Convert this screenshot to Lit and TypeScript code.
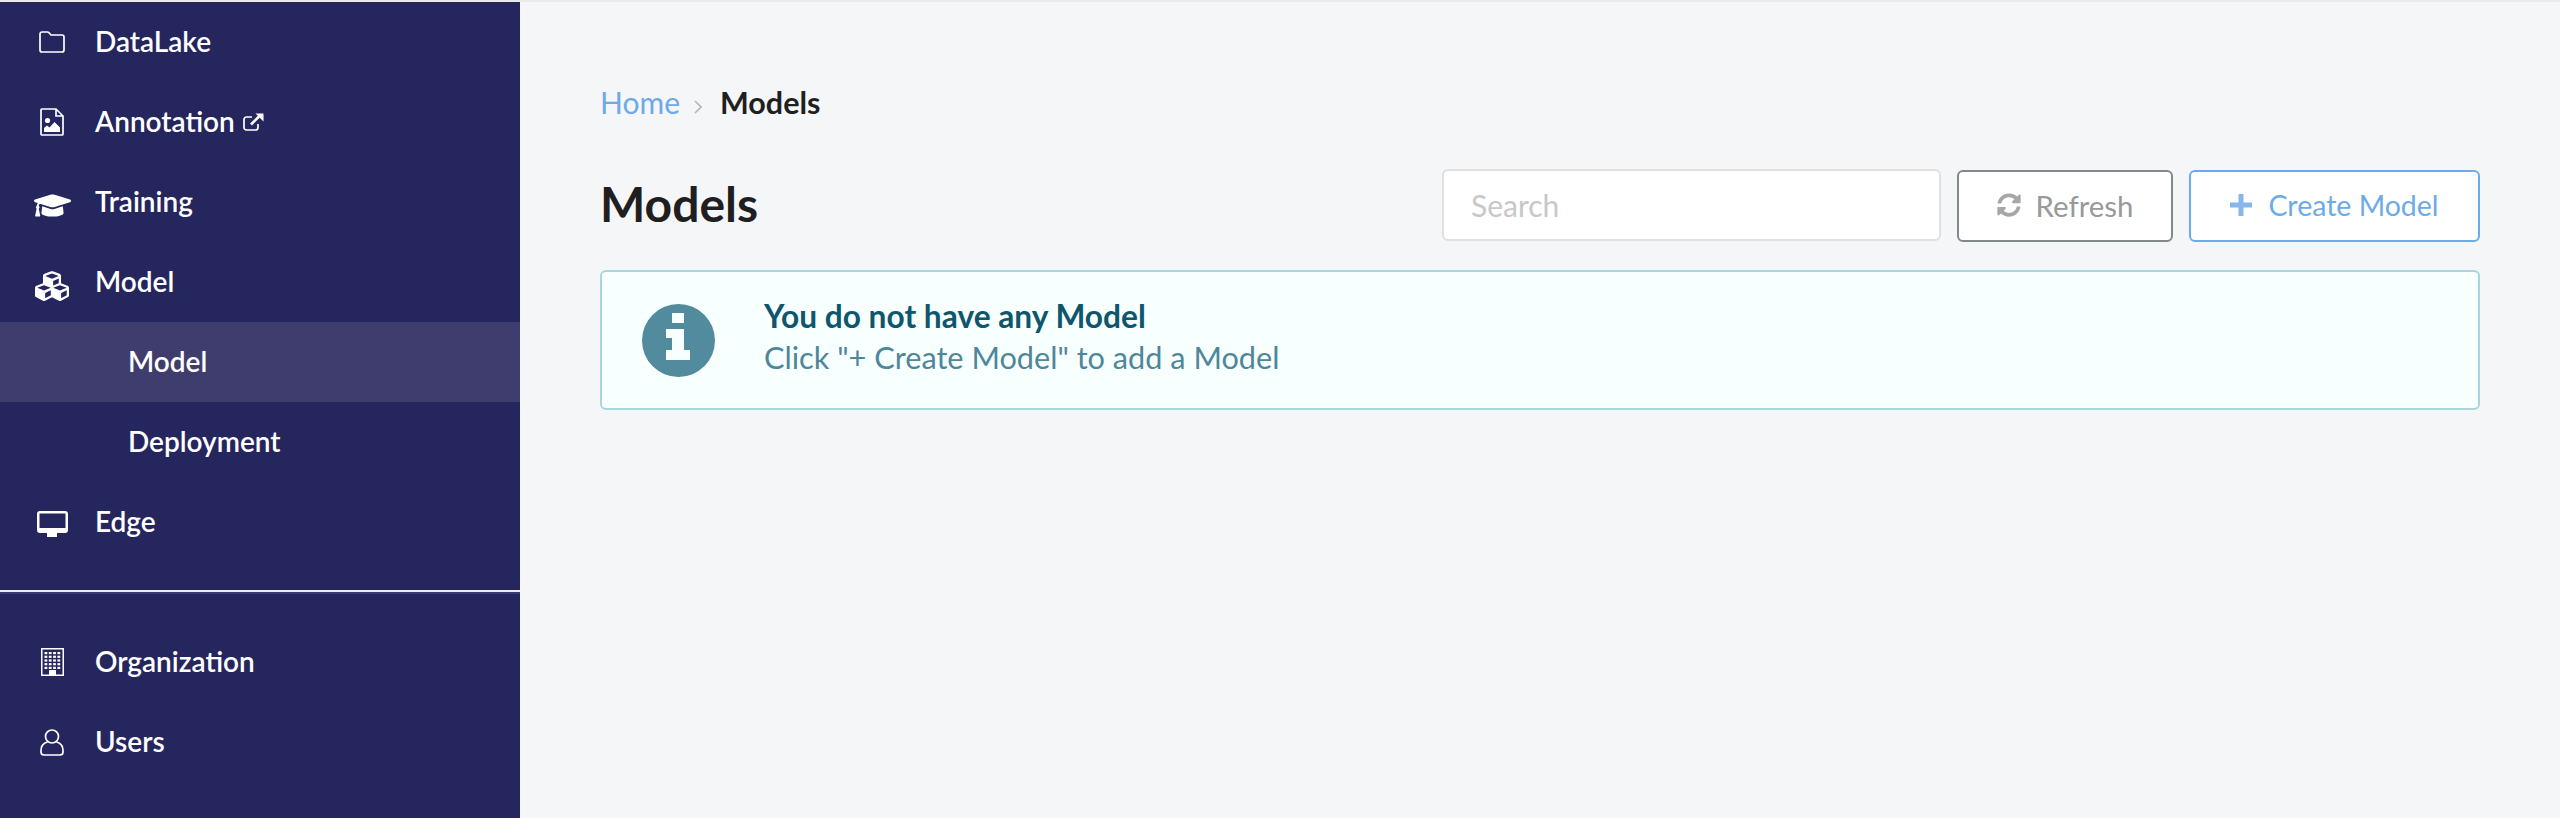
import { LitElement, html, css, svg } from 'lit';
import { customElement } from 'lit/decorators.js';

// icons, all white on the sidebar
const icons: Record<string, unknown> = {
  folder: html`<svg class="ic" width="26" height="22" viewBox="0 0 26 22"><path d="M1 4V3a2 2 0 0 1 2-2h5.500a2 2 0 0 1 1.500.7L12 4h11a2 2 0 0 1 2 2v13a2 2 0 0 1-2 2H3a2 2 0 0 1-2-2z" fill="none" stroke="#fff" stroke-width="1.700"/></svg>`,
  image: html`<svg class="ic" width="24" height="28" viewBox="0 0 24 28"><path d="M2 1h14l7 7v18a1 1 0 0 1-1 1H2a1 1 0 0 1-1-1V2a1 1 0 0 1 1-1zM16 1v7h7" fill="none" stroke="#fff" stroke-width="1.700"/><circle cx="7.500" cy="12.500" r="2.600" fill="#fff"/><path d="M4 24v-4l3-2.500 2.500 2 5-5.500 5.500 5.500V24z" fill="#fff"/></svg>`,
  cap: html`<svg class="ic cap" width="37" height="23" viewBox="0 64 640 384"><path fill="#fff" d="M622.34 153.2L343.4 67.5c-15.2-4.67-31.6-4.67-46.79 0L17.66 153.2c-23.54 7.23-23.54 38.36 0 45.59l48.63 14.94c-10.67 13.19-17.23 29.28-17.88 46.9C38.78 266.15 32 276.11 32 288c0 10.78 5.68 19.85 13.86 25.65L20.33 428.53C18.11 438.52 25.71 448 35.94 448h56.11c10.24 0 17.84-9.48 15.62-19.47L82.14 313.65C90.32 307.85 96 298.78 96 288c0-11.57-6.47-21.25-15.66-26.87.76-15.02 8.44-28.3 20.69-36.72L296.6 284.5c9.06 2.78 26.44 6.25 46.79 0l278.95-85.7c23.55-7.24 23.55-38.36 0-45.6zM352.79 315.09c-28.53 8.76-52.84 3.92-65.59 0l-145.02-44.55L128 384c0 35.35 85.96 64 192 64s192-28.65 192-64l-14.18-113.47-145.03 44.56z"/></svg>`,
  cubes: html`<svg class="ic cubes" width="34" height="30" viewBox="0 30 512 450"><path fill="#fff" d="M488.6 250.2L392 214V105.5c0-15-9.3-28.4-23.4-33.7l-100-37.5c-8.1-3.1-17.1-3.1-25.3 0l-100 37.5c-14.1 5.3-23.4 18.7-23.4 33.7V214l-96.6 36.2C9.3 255.5 0 268.9 0 283.9V394c0 13.6 7.7 26.1 19.9 32.2l100 50c10.1 5.1 22.1 5.1 32.2 0l103.9-52 103.9 52c10.1 5.1 22.1 5.1 32.2 0l100-50c12.2-6.1 19.9-18.6 19.9-32.2V283.9c0-15-9.3-28.4-23.4-33.7zM358 214.8l-85 31.9v-68.2l85-37v73.3zM154 104.1l102-38.2 102 38.2v.6l-102 41.4-102-41.4v-.6zm84 291.1l-85 42.5v-79.1l85-38.8v75.4zm0-112l-102 41.4-102-41.4v-.6l102-38.2 102 38.2v.6zm240 112l-85 42.5v-79.1l85-38.8v75.4zm0-112l-102 41.4-102-41.4v-.6l102-38.2 102 38.2v.6z"/></svg>`,
  desktop: html`<svg class="ic desktop" width="31" height="26" viewBox="0 0 31 26"><path fill="#fff" fill-rule="evenodd" d="M3 0h25a3 3 0 0 1 3 3v16a3 3 0 0 1-3 3H3a3 3 0 0 1-3-3V3a3 3 0 0 1 3-3zM2.500 2.500v14.500h26V2.500z"/><path fill="#fff" d="M10 22h10v4H10z"/></svg>`,
  building: html`<svg class="ic" width="23" height="28" viewBox="0 0 23 28"><path fill="#fff" fill-rule="evenodd" d="M0 0h23v28H0zM1.500 1.500v25h20v-25z"/><path fill="#fff" d="M8 22h7v6H8z"/>${[0, 1, 2, 3, 4].map((r) =>
    [0, 1, 2, 3].map((c) => svg`<rect x=${3.5 + c * 4.3} y=${4 + r * 3.7} width="2.800" height="2.200" fill="#fff"/>`)
  )}</svg>`,
  user: html`<svg class="ic" width="24" height="27" viewBox="0 0 24 27"><circle cx="12" cy="7.500" r="6.500" fill="none" stroke="#fff" stroke-width="1.700"/><path d="M7.500 13C4 14 1 17 1 21.500V23a3 3 0 0 0 3 3h16a3 3 0 0 0 3-3v-1.500C23 17 20 14 16.500 13" fill="none" stroke="#fff" stroke-width="1.700"/></svg>`,
};

const topNav = [
  { label: 'DataLake', icon: 'folder' },
  { label: 'Annotation', icon: 'image', external: true },
  { label: 'Training', icon: 'cap' },
  { label: 'Model', icon: 'cubes' },
  { label: 'Model', sub: true, active: true },
  { label: 'Deployment', sub: true },
  { label: 'Edge', icon: 'desktop' },
];

const bottomNav = [
  { label: 'Organization', icon: 'building' },
  { label: 'Users', icon: 'user' },
];

@customElement('app-root')
export class AppRoot extends LitElement {
  static styles = css`
    :host {
      display: block;
      width: 2560px;
      height: 818px;
      overflow: hidden;
      background: #f5f6f8;
      font-family: 'Lato', sans-serif;
    }
    .page {
      display: flex;
      height: 816px;
      border-top: 2px solid #e9eaec;
    }
    .sidebar {
      flex: 0 0 520px;
      background: #26265f;
      color: #fff;
      display: flex;
      flex-direction: column;
    }
    .row {
      display: flex;
      align-items: center;
      height: 80px;
      font-size: 28px;
      font-weight: 600;
    }
    .row.active {
      background: #3f3c6e;
    }
    .row span.label {
      padding-bottom: 2px;
    }
    .slot {
      flex: 0 0 95px;
      display: flex;
      justify-content: center;
      box-sizing: border-box;
      padding-left: 24px;
      padding-right: 15px;
    }
    .cap {
      margin-top: 6px;
    }
    .cubes {
      margin-top: 8px;
    }
    .desktop {
      margin-top: 4px;
    }
    .sublabel {
      padding-left: 128px;
    }
    .ext {
      margin-left: 8px;
    }
    .divider {
      margin-top: 28px;
      height: 2px;
      background: #eeeef2;
      border-bottom: 2px solid #3a3a70;
      margin-bottom: 28px;
    }
    .main {
      flex: 1;
      padding: 0 80px;
      color: #1f1f1f;
    }
    .crumbs {
      display: flex;
      align-items: center;
      margin-top: 81px;
      height: 38px;
      font-size: 30px;
    }
    .crumbs a {
      color: #6eaae8;
    }
    .crumbs svg {
      margin: 9px 18px 0 14px;
    }
    .crumbs b {
      font-weight: 700;
      font-size: 30.500px;
    }
    .head {
      display: flex;
      justify-content: space-between;
      align-items: flex-start;
      margin-top: 47px;
    }
    h1 {
      margin: 0;
      font-size: 48px;
      font-weight: 700;
      line-height: 72px;
    }
    .tools {
      display: flex;
      align-items: flex-start;
      gap: 16px;
      margin-top: 2px;
    }
    .search {
      width: 499px;
      height: 72px;
      margin-top: -1px;
      box-sizing: border-box;
      border: 2px solid #dfe0e2;
      border-radius: 6px;
      background: #fff;
      padding-left: 27px;
      font-size: 30px;
      color: #c8c8c8;
      display: flex;
      align-items: center;
    }
    .btn {
      height: 72px;
      box-sizing: border-box;
      border-radius: 6px;
      background: #fff;
      display: flex;
      align-items: center;
      justify-content: center;
      padding-bottom: 2px;
    }
    .refresh {
      width: 216px;
      border: 2px solid #838888;
      color: #969a9a;
      font-size: 29.400px;
      gap: 15px;
    }
    .create {
      width: 291px;
      border: 2px solid #6dabe8;
      color: #6dabe8;
      font-size: 28.500px;
      gap: 16px;
    }
    .message {
      display: flex;
      align-items: center;
      height: 140px;
      box-sizing: border-box;
      margin-top: 28px;
      border: 2px solid #a9d5de;
      border-radius: 6px;
      background: #f8ffff;
      padding-left: 40px;
      gap: 49px;
    }
    .msg-text {
      padding-bottom: 6px;
    }
    .msg-title {
      font-size: 31.700px;
      font-weight: 700;
      color: #0e566c;
      line-height: 40px;
    }
    .msg-sub {
      font-size: 30.700px;
      color: #4d8799;
      line-height: 40px;
      margin-top: 2px;
    }
  `;

  renderRow(item: any) {
    if (item.sub) {
      return html`<div class="row ${item.active ? 'active' : ''}"><span class="label sublabel">${item.label}</span></div>`;
    }
    return html`<div class="row">
      <span class="slot">${icons[item.icon]}</span>
      <span class="label">${item.label}</span>
      ${item.external
        ? html`<svg class="ext" width="21" height="18" viewBox="0 0 21 18" fill="none" stroke="#fff" stroke-width="1.700"><path d="M15 11v3.500a2.500 2.500 0 0 1-2.500 2.500H3.500A2.500 2.500 0 0 1 1 14.500v-8A2.500 2.500 0 0 1 3.500 4H9"/><path d="M8 11.500L16 3.500" stroke-width="2.600"/><path d="M12.500 0.500H20.500V8.500z" fill="#fff" stroke="none"/></svg>`
        : ''}
    </div>`;
  }

  render() {
    return html`<div class="page">
      <nav class="sidebar">
        ${topNav.map((i) => this.renderRow(i))}
        <div class="divider"></div>
        ${bottomNav.map((i) => this.renderRow(i))}
      </nav>
      <main class="main">
        <div class="crumbs">
          <a>Home</a>
          <svg width="8" height="14" viewBox="0 0 8 14" fill="none" stroke="#b5b5b5" stroke-width="1.600"><path d="M1 1l6 6-6 6"/></svg>
          <b>Models</b>
        </div>
        <div class="head">
          <h1>Models</h1>
          <div class="tools">
            <div class="search">Search</div>
            <div class="btn refresh">
              <svg width="24" height="24" viewBox="0 0 512 512"><path fill="#a3a7a7" d="M370.72 133.28C339.458 104.008 298.888 87.962 255.848 88c-77.458.068-144.328 53.178-162.791 126.85-1.344 5.363-6.122 9.15-11.651 9.15H24.103c-7.498 0-13.194-6.807-11.807-14.176C33.933 94.924 134.813 8 256 8c66.448 0 126.791 26.136 171.315 68.685L463.03 40.97C478.149 25.851 504 36.559 504 57.941V192c0 13.255-10.745 24-24 24H345.941c-21.382 0-32.09-25.851-16.971-40.971l41.75-41.749zM32 296h134.059c21.382 0 32.09 25.851 16.971 40.971l-41.75 41.75c31.262 29.273 71.835 45.319 114.876 45.28 77.418-.07 144.315-53.144 162.787-126.849 1.344-5.363 6.122-9.15 11.651-9.15h57.304c7.498 0 13.193 6.807 11.807 14.176C478.067 417.076 377.187 504 256 504c-66.448 0-126.791-26.136-171.315-68.685L48.97 471.03C33.851 486.149 8 475.441 8 454.059V320c0-13.255 10.745-24 24-24z"/></svg>
              Refresh
            </div>
            <div class="btn create">
              <svg width="22" height="22" viewBox="0 0 22 22"><path fill="#86b6eb" d="M8.500 0h5v8.500H22v5h-8.500V22h-5v-8.500H0v-5h8.500z"/></svg>
              Create Model
            </div>
          </div>
        </div>
        <div class="message">
          <svg width="73" height="73" viewBox="0 0 73 73"><path fill="#528b9e" fill-rule="evenodd" d="M36.500 0a36.500 36.500 0 1 1 0 73a36.500 36.500 0 1 1 0-73zM30 9v10h12V9zM24 25v9h6v12h-6v10h24V46h-6V25z"/></svg>
          <div class="msg-text">
            <div class="msg-title">You do not have any Model</div>
            <div class="msg-sub">Click "+ Create Model" to add a Model</div>
          </div>
        </div>
      </main>
    </div>`;
  }
}
